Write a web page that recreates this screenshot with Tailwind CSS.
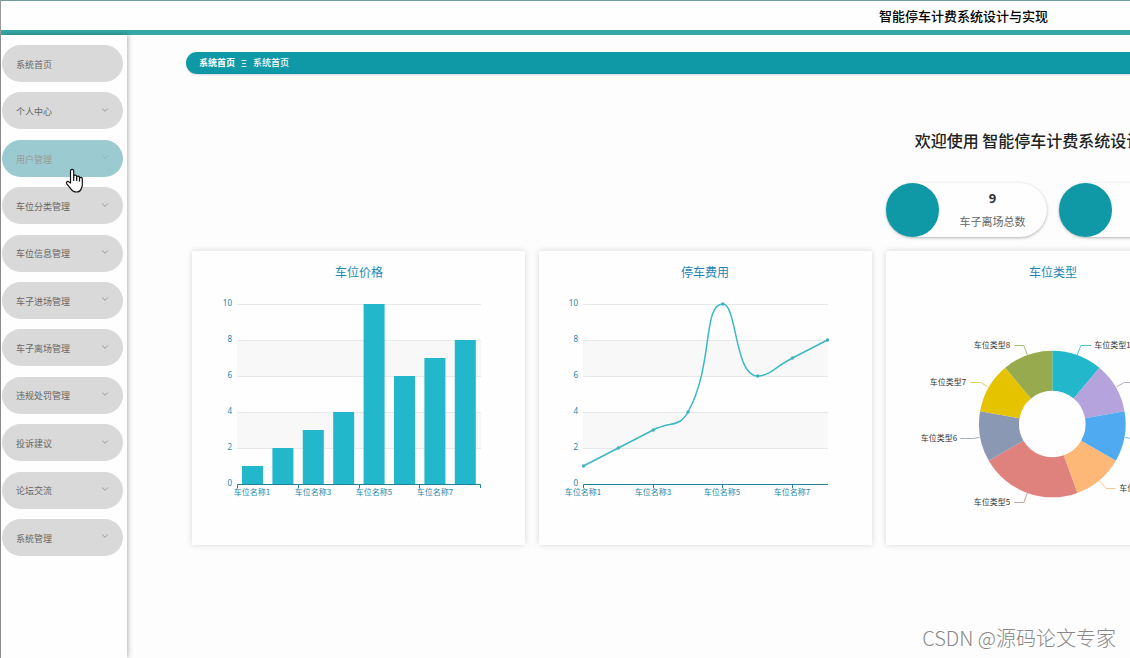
<!DOCTYPE html>
<html lang="zh-CN">
<head>
<meta charset="utf-8">
<title>智能停车计费系统设计与实现</title>
<script src="https://cdn.jsdelivr.net/npm/@tailwindcss/browser@4"></script>
</head>
<body class="relative min-h-screen overflow-hidden bg-[#fdfdfd] font-['Noto_Sans_CJK_SC',sans-serif] text-[#333]">
<div class="flex min-h-screen min-w-[1926px] flex-col border-l border-[#999]">
  <header class="flex h-[35px] items-center justify-center border-t border-b-5 border-t-[#6f9a9d] border-b-[#36a7a7] bg-[#fefefe]">
    <h1 class="text-[13px] leading-5 font-medium text-black">智能停车计费系统设计与实现</h1>
  </header>
  <div class="flex flex-1">
    <aside class="w-[126px] shrink-0 bg-[#fefefe] pt-[10px] pr-1 pl-px shadow-[1px_0_5px_rgba(0,0,0,0.3)]">
      <nav class="flex h-[511px] flex-col justify-between text-[9px] text-[#666]">
        <a href="#" class="flex h-[37px] items-center rounded-full bg-[#d9d9d9] pr-[14px] pl-[14px] pt-[2px]">系统首页</a>
        <button type="button" class="flex h-[37px] items-center justify-between rounded-full bg-[#d9d9d9] pr-[14px] pl-[14px] pt-[2px]">个人中心<svg class="mb-1 h-2 w-2" viewBox="0 0 8 8" fill="none" stroke="#999"><path d="M1.2 2.5 4 5.3 6.8 2.5"/></svg></button>
        <button type="button" class="flex h-[37px] items-center justify-between rounded-full bg-[#9bcad0] pr-[14px] pl-[14px] pt-[2px] text-[#999]">用户管理<svg class="mb-1 h-2 w-2" viewBox="0 0 8 8" fill="none" stroke="#8bb5ba"><path d="M1.2 2.5 4 5.3 6.8 2.5"/></svg></button>
        <button type="button" class="flex h-[37px] items-center justify-between rounded-full bg-[#d9d9d9] pr-[14px] pl-[14px] pt-[2px]">车位分类管理<svg class="mb-1 h-2 w-2" viewBox="0 0 8 8" fill="none" stroke="#999"><path d="M1.2 2.5 4 5.3 6.8 2.5"/></svg></button>
        <button type="button" class="flex h-[37px] items-center justify-between rounded-full bg-[#d9d9d9] pr-[14px] pl-[14px] pt-[2px]">车位信息管理<svg class="mb-1 h-2 w-2" viewBox="0 0 8 8" fill="none" stroke="#999"><path d="M1.2 2.5 4 5.3 6.8 2.5"/></svg></button>
        <button type="button" class="flex h-[37px] items-center justify-between rounded-full bg-[#d9d9d9] pr-[14px] pl-[14px] pt-[2px]">车子进场管理<svg class="mb-1 h-2 w-2" viewBox="0 0 8 8" fill="none" stroke="#999"><path d="M1.2 2.5 4 5.3 6.8 2.5"/></svg></button>
        <button type="button" class="flex h-[37px] items-center justify-between rounded-full bg-[#d9d9d9] pr-[14px] pl-[14px] pt-[2px]">车子离场管理<svg class="mb-1 h-2 w-2" viewBox="0 0 8 8" fill="none" stroke="#999"><path d="M1.2 2.5 4 5.3 6.8 2.5"/></svg></button>
        <button type="button" class="flex h-[37px] items-center justify-between rounded-full bg-[#d9d9d9] pr-[14px] pl-[14px] pt-[2px]">违规处罚管理<svg class="mb-1 h-2 w-2" viewBox="0 0 8 8" fill="none" stroke="#999"><path d="M1.2 2.5 4 5.3 6.8 2.5"/></svg></button>
        <button type="button" class="flex h-[37px] items-center justify-between rounded-full bg-[#d9d9d9] pr-[14px] pl-[14px] pt-[2px]">投诉建议<svg class="mb-1 h-2 w-2" viewBox="0 0 8 8" fill="none" stroke="#999"><path d="M1.2 2.5 4 5.3 6.8 2.5"/></svg></button>
        <button type="button" class="flex h-[37px] items-center justify-between rounded-full bg-[#d9d9d9] pr-[14px] pl-[14px] pt-[2px]">论坛交流<svg class="mb-1 h-2 w-2" viewBox="0 0 8 8" fill="none" stroke="#999"><path d="M1.2 2.5 4 5.3 6.8 2.5"/></svg></button>
        <button type="button" class="flex h-[37px] items-center justify-between rounded-full bg-[#d9d9d9] pr-[14px] pl-[14px] pt-[2px]">系统管理<svg class="mb-1 h-2 w-2" viewBox="0 0 8 8" fill="none" stroke="#999"><path d="M1.2 2.5 4 5.3 6.8 2.5"/></svg></button>
      </nav>
    </aside>
    <main class="flex-1 pt-[17px] pl-[59px]">
      <nav aria-label="面包屑" class="flex h-[22px] items-center rounded-l-full bg-[#0f98a6] pl-[13px] text-[9px] text-white shadow-[0_1px_2px_rgba(0,0,0,0.15)]">
        <a href="#" class="font-bold">系统首页</a>
        <svg class="mx-[6px] h-[7px] w-[6px]" viewBox="0 0 6 7" stroke="#fff" stroke-width="0.8"><path d="M0.5 0.5h5M1 3.5h4M0.5 6.5h5"/></svg>
        <a href="#" class="font-medium">系统首页</a>
      </nav>
      <div class="pr-[13px] pl-[6px]">
        <h2 class="pt-[54px] text-center text-base leading-6 font-medium text-[#222]">欢迎使用 智能停车计费系统设计与实现</h2>
        <div class="mt-[31px] flex justify-center gap-3">
          <section class="flex h-[54px] w-[161px] rounded-full bg-[#fefefe] shadow-[0_1px_3px_rgba(0,0,0,0.3)]">
            <div class="h-[54px] w-[53px] shrink-0 rounded-full bg-[#0f98a6]"></div>
            <div class="flex flex-1 flex-col items-center pt-[5px]">
              <strong class="font-['Noto_Sans','Noto_Sans_CJK_SC',sans-serif] text-[13px] leading-5 font-bold">9</strong>
              <span class="mt-[3px] text-[11px] leading-5 text-[#666]">车子离场总数</span>
            </div>
          </section>
          <section class="flex h-[54px] w-[161px] rounded-full bg-[#fefefe] shadow-[0_1px_3px_rgba(0,0,0,0.3)]">
            <div class="h-[54px] w-[53px] shrink-0 rounded-full bg-[#0f98a6]"></div>
          </section>
        </div>
        <div class="mt-[14px] grid grid-cols-5 gap-[14px]">
          <!-- Bar chart -->
          <section class="bg-[#fefefe] shadow-[0_0_6px_rgba(0,0,0,0.16)]">
            <svg class="block w-full" viewBox="0 0 333 294" font-size="8" fill="#2187ad">
              <text x="167" y="26" font-size="12" text-anchor="middle" fill="#1a86b5">车位价格</text>
              <path fill="#f8f8f8" d="M45 89h244v36H45zM45 161h244v36H45z"/>
              <path stroke="#e6e9ea" d="M45 53.5h244M45 89.5h244M45 125.5h244M45 161.5h244M45 197.5h244"/>
              <g fill="#23b7cb">
                <rect x="50" y="215" width="21" height="18"/><rect x="80.4" y="197" width="21" height="36"/>
                <rect x="110.8" y="179" width="21" height="54"/><rect x="141.2" y="161" width="21" height="72"/>
                <rect x="171.6" y="53" width="21" height="180"/><rect x="202" y="125" width="21" height="108"/>
                <rect x="232.4" y="107" width="21" height="126"/><rect x="262.8" y="89" width="21" height="144"/>
              </g>
              <path stroke="#23819a" fill="none" d="M45.5 237v-3.500h243V237M106.500 233v4M167.500 233v4M227.500 233v4"/>
              <g text-anchor="end" font-family="Noto Sans">
                <text x="40" y="55">10</text><text x="40" y="91">8</text><text x="40" y="127">6</text><text x="40" y="163">4</text><text x="40" y="199">2</text><text x="40" y="235">0</text>
              </g>
              <g text-anchor="middle"><text x="60" y="244">车位名称1</text><text x="121" y="244">车位名称3</text><text x="182" y="244">车位名称5</text><text x="243" y="244">车位名称7</text></g>
            </svg>
          </section>
          <!-- Line chart -->
          <section class="bg-[#fefefe] shadow-[0_0_6px_rgba(0,0,0,0.16)]">
            <svg class="block w-full" viewBox="0 0 333 294" font-size="8" fill="#2187ad">
              <text x="166" y="26" font-size="12" text-anchor="middle" fill="#1a86b5">停车费用</text>
              <path fill="#f8f8f8" d="M44 89h245v36H44zM44 161h245v36H44z"/>
              <path stroke="#e6e9ea" d="M44 53.5h245M44 89.5h245M44 125.5h245M44 161.5h245M44 197.5h245"/>
              <path stroke="#23819a" fill="none" d="M44.500 237v-3.500h244.500M114.500 233v4M183.500 233v4M253.500 233v4"/>
              <path stroke="#3bb8c4" stroke-width="1.500" fill="none" d="M44.500 215L79.300 197L114.200 179C131.600 170 140.100 177.200 149 161C174.900 114.200 163.400 53 183.800 53C198.200 53 195.200 125 218.700 125C230.200 125 236.100 116 253.500 107L288.500 89"/>
              <g fill="#3fb2bb"><circle cx="44.500" cy="215" r="1.700"/><circle cx="79.300" cy="197" r="1.700"/><circle cx="114.200" cy="179" r="1.700"/><circle cx="149" cy="161" r="1.700"/><circle cx="183.800" cy="53" r="1.700"/><circle cx="218.700" cy="125" r="1.700"/><circle cx="253.500" cy="107" r="1.700"/><circle cx="288.500" cy="89" r="1.700"/></g>
              <g text-anchor="end" font-family="Noto Sans">
                <text x="39" y="55">10</text><text x="39" y="91">8</text><text x="39" y="127">6</text><text x="39" y="163">4</text><text x="39" y="199">2</text><text x="39" y="235">0</text>
              </g>
              <g text-anchor="middle"><text x="44" y="244">车位名称1</text><text x="114" y="244">车位名称3</text><text x="183" y="244">车位名称5</text><text x="253" y="244">车位名称7</text></g>
            </svg>
          </section>
          <!-- Donut chart -->
          <section class="bg-[#fefefe] shadow-[0_0_6px_rgba(0,0,0,0.16)]">
            <svg class="block w-full" viewBox="0 0 333 294" font-size="8" fill="#333">
              <text x="167" y="26" font-size="12" text-anchor="middle" fill="#1a86b5">车位类型</text>
              <g transform="translate(166.300 173)">
                <path fill="#23b7cb" d="M0-73.300A73.300 73.300 0 0 1 47.100-56.200L21.400-25.500A33.300 33.300 0 0 0 0-33.300z"/>
                <path fill="#b4a3dc" d="M47.100-56.200A73.300 73.300 0 0 1 72.200-12.700L32.800-5.800A33.300 33.300 0 0 0 21.400-25.500z"/>
                <path fill="#50aaf2" d="M72.200-12.700A73.300 73.300 0 0 1 63.500 36.700L28.800 16.700A33.300 33.300 0 0 0 32.800-5.800z"/>
                <path fill="#fdb878" d="M63.500 36.700A73.300 73.300 0 0 1 25.100 68.900L11.400 31.300A33.300 33.300 0 0 0 28.800 16.700z"/>
                <path fill="#df827d" d="M25.100 68.900A73.300 73.300 0 0 1-63.500 36.700L-28.800 16.700A33.300 33.300 0 0 0 11.400 31.300z"/>
                <path fill="#8b98b4" d="M-63.500 36.700A73.300 73.300 0 0 1-72.200-12.700L-32.800-5.800A33.300 33.300 0 0 0-28.800 16.700z"/>
                <path fill="#e5c300" d="M-72.200-12.700A73.300 73.300 0 0 1-47.100-56.200L-21.400-25.500A33.300 33.300 0 0 0-32.800-5.800z"/>
                <path fill="#97ab4e" d="M-47.100-56.200A73.300 73.300 0 0 1 0-73.300V-33.300A33.300 33.300 0 0 0-21.400-25.500z"/>
                <g fill="none" stroke-width="0.800">
                  <path stroke="#23b7cb" d="M25-69L28.500-78.500H39"/>
                  <path stroke="#a79bc0" d="M64.500-37.300L72-41.500H83"/>
                  <path stroke="#50aaf2" d="M72.500 13.300L79 14.500H92"/>
                  <path stroke="#fdb878" d="M47.500 57L53.700 64.500H63.300"/>
                  <path stroke="#c08581" d="M-25 69L-28.500 78.500H-38"/>
                  <path stroke="#8b98b4" d="M-72.700 13.300L-79 14.500H-92"/>
                  <path stroke="#e0c22a" d="M-64.700-37.300L-71.500-41.500H-82"/>
                  <path stroke="#97ab4e" d="M-25-69L-28.500-78.500H-38"/>
                </g>
                <text x="42" y="-76">车位类型1</text><text x="86" y="-39">车位类型2</text><text x="96" y="17">车位类型3</text><text x="67" y="67">车位类型4</text>
                <g text-anchor="end"><text x="-42" y="81">车位类型5</text><text x="-95" y="17">车位类型6</text><text x="-86" y="-39">车位类型7</text><text x="-42" y="-76">车位类型8</text></g>
              </g>
            </svg>
          </section>
        </div>
      </div>
    </main>
  </div>
</div>
<!-- Mouse pointer over the menu -->
<svg class="pointer-events-none absolute top-[168px] left-[65px] h-[25px] w-[19px]" viewBox="0 0 19 25" fill="#fff" stroke="#111" stroke-width="1.200" stroke-linejoin="round"><path d="M5.500 15V3a1.600 1.600 0 0 1 3.200 0v6.500-1a1.500 1.500 0 0 1 3 .2v1.500-.7a1.400 1.400 0 0 1 2.800.2v1.300-.3a1.400 1.400 0 0 1 2.800.2V17c0 2-.8 3-1.300 4.200-.8 2-2 2.800-4.500 2.800-3 0-4.200-.8-5.500-2.800-1.200-2-2.500-3.200-4-5-1.600-2.200.6-3.600 2-2.300z"/><path fill="none" d="M8.700 9.500V13M11.700 10v3M14.500 11v2.500"/></svg>
<p class="absolute right-[14px] bottom-[5px] text-xl leading-[30px] font-light text-[#888]">CSDN @源码论文专家</p>
</body>
</html>
